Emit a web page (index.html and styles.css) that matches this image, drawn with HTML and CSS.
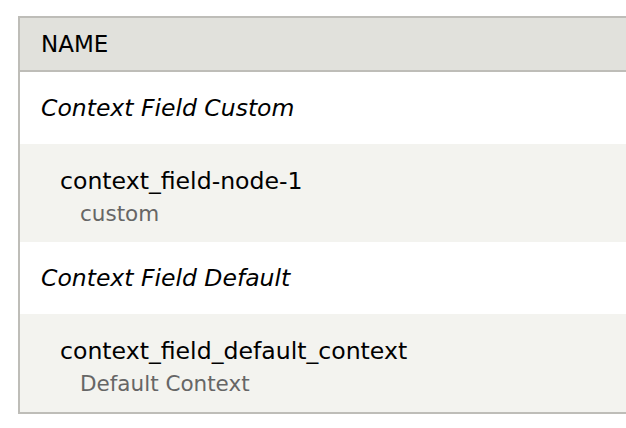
FILE: index.html
```html
<!DOCTYPE html>
<html>
<head>
<meta charset="utf-8">
<link rel="stylesheet" href="styles.css">
</head>
<body>
<div class="table">
  <div class="head">NAME</div>
  <div class="group">Context Field Custom</div>
  <div class="item">
    <div class="name">context_field-node-1</div>
    <div class="desc">custom</div>
  </div>
  <div class="group">Context Field Default</div>
  <div class="item">
    <div class="name">context_field_default_context</div>
    <div class="desc">Default Context</div>
  </div>
</div>
</body>
</html>
```
FILE: styles.css
```css
html, body {
  margin: 0;
  padding: 0;
  background: #fff;
  overflow: hidden;
}
body {
  font-family: "DejaVu Sans", sans-serif;
  color: #000;
}
.table {
  margin: 16px 0 0 18px;
  width: 608px;
  border: 2px solid #bebdb8;
  border-right: none;
}
.head {
  height: 52px;
  display: flex;
  align-items: center;
  padding-left: 21px;
  background: #e1e1dc;
  border-bottom: 2px solid #bebdb8;
  font-size: 23px;
}
.group {
  height: 72px;
  display: flex;
  align-items: center;
  padding-left: 21px;
  font-style: italic;
  font-size: 23.5px;
  background: #fff;
}
.item {
  height: 98px;
  box-sizing: border-box;
  display: flex;
  flex-direction: column;
  justify-content: center;
  padding-top: 8px;
  padding-left: 40px;
  background: #f3f3ef;
}
.name {
  font-size: 23.6px;
  line-height: 30px;
}
.desc {
  font-size: 21.5px;
  line-height: 30px;
  margin-top: 3px;
  color: #666;
  padding-left: 20px;
}
```
